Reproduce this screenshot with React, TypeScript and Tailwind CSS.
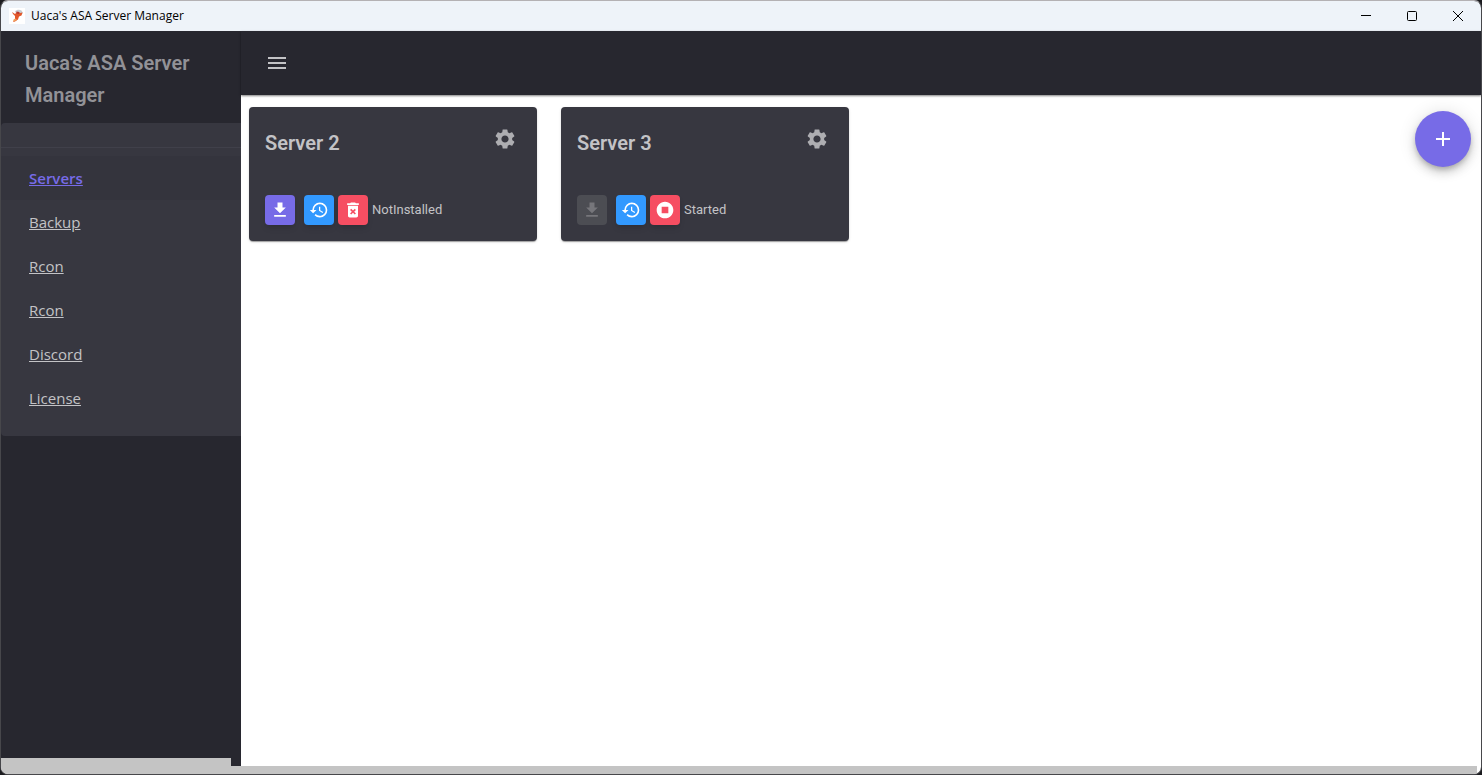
import type { ReactNode } from 'react';
import { MdAdd, MdDeleteForever, MdDownload, MdHistory, MdMenu, MdSettings, MdStopCircle } from 'react-icons/md';
import { clsx } from 'clsx';

type Server = {
  name: string;
  status: string;
  installed: boolean;
};

const servers: Server[] = [
  { name: 'Server 2', status: 'NotInstalled', installed: false },
  { name: 'Server 3', status: 'Started', installed: true },
];

const navItems = ['Servers', 'Backup', 'Rcon', 'Rcon', 'Discord', 'License'];

function AppIcon() {
  return (
    <svg viewBox="0 0 16 16" className="size-4" aria-hidden="true">
      <path d="M0 0h16v16H0z" fill="#fff" />
      <path d="M6 3.500C7 1.500 11 1 12.500 2.500L14 5l-2 2-5-2z" fill="#c9cdd2" />
      <path d="M3 4l3 2 2-2 3 1 2.500-.5-1 3-2.500 1-1 3-3 2-2 .5 2-3.500V8L4 6z" fill="#e2582b" />
      <path d="M7.500 3.500l3 .5-.5 2-2.500-.5z" fill="#b5372f" />
      <path d="M4 12l2.500-1.500L8 12l-3 1.500z" fill="#f0a05a" />
    </svg>
  );
}

function TitleBar() {
  return (
    <div className="flex h-[30px] shrink-0 items-center bg-[#eef3f9] font-['Open_Sans','Noto_Sans',sans-serif] text-black">
      <div className="flex flex-1 items-center gap-[6px] pl-2">
        <AppIcon />
        <span className="text-[12px]">Uaca's ASA Server Manager</span>
      </div>
      <button aria-label="Minimize" className="flex h-full w-[46px] items-center justify-center">
        <svg viewBox="0 0 12 12" className="size-3" stroke="currentColor" fill="none">
          <path d="M1 5.500h10" />
        </svg>
      </button>
      <button aria-label="Maximize" className="flex h-full w-[46px] items-center justify-center">
        <svg viewBox="0 0 12 12" className="size-3" stroke="currentColor" fill="none">
          <rect x="1.500" y="1.500" width="9" height="9" rx="1" />
        </svg>
      </button>
      <button aria-label="Close" className="flex h-full w-[46px] items-center justify-center">
        <svg viewBox="0 0 12 12" className="size-3" stroke="currentColor" fill="none">
          <path d="M1 1l10 10M11 1L1 11" />
        </svg>
      </button>
    </div>
  );
}

function Sidebar() {
  return (
    <aside className="flex w-60 shrink-0 flex-col bg-[#27272f]">
      <h1 className="px-6 pt-4 pb-3 text-[20px] leading-8 font-semibold text-[#929297]">Uaca's ASA Server Manager</h1>
      <nav className="rounded-l bg-[#373740] pb-4 font-['Open_Sans','Noto_Sans',sans-serif]">
        <hr className="mb-2 border-0 border-b border-[#40404a] pt-6" />
        {navItems.map((item, i) => (
          <div key={i} className={clsx('flex h-11 items-center px-7', i === 0 && 'bg-[#34343d]')}>
            <a
              href="#"
              className={clsx('text-[15px] underline', i === 0 ? 'font-semibold text-[#776be7]' : 'text-[#c3c3c6]')}
            >
              {item}
            </a>
          </div>
        ))}
      </nav>
      {/* Horizontal scrollbar */}
      <div className="mt-auto mr-[10px] h-2 bg-[#c4c4c4]" />
    </aside>
  );
}

type IconButtonProps = {
  label: string;
  color: string;
  disabled?: boolean;
  children: ReactNode;
};

function IconButton({ label, color, disabled, children }: IconButtonProps) {
  return (
    <button
      aria-label={label}
      disabled={disabled}
      className={clsx('flex size-[30px] items-center justify-center rounded text-[20px]', color)}
    >
      {children}
    </button>
  );
}

function ServerCard({ server }: { server: Server }) {
  return (
    <article className="w-72 rounded bg-[#373740] p-4 text-[#c3c3c6] shadow-[0_2px_1px_-1px_rgba(0,0,0,0.2),0_1px_1px_rgba(0,0,0,0.14),0_1px_3px_rgba(0,0,0,0.12)]">
      <div className="flex items-start justify-between">
        <h2 className="pt-1 text-[20px] leading-8 font-semibold">{server.name}</h2>
        <button aria-label={`${server.name} settings`} className="p-1 text-[24px] text-[#adadb1]">
          <MdSettings />
        </button>
      </div>
      <div className="mt-9 flex items-center">
        <IconButton
          label="Install"
          disabled={server.installed}
          color={server.installed ? 'bg-[#4c4d53] text-[#76767b]' : 'bg-[#776be7] text-white shadow-md'}
        >
          <MdDownload />
        </IconButton>
        <div className="ml-[9px] flex items-center gap-1">
          <IconButton label="Update" color="bg-[#3299ff] text-white shadow-md">
            <MdHistory />
          </IconButton>
          <IconButton
            label={server.installed ? 'Stop' : 'Delete'}
            color="bg-[#f64e62] text-white shadow-md"
          >
            {server.installed ? <MdStopCircle /> : <MdDeleteForever />}
          </IconButton>
          <span className="text-[13px] leading-5">{server.status}</span>
        </div>
      </div>
    </article>
  );
}

function App() {
  return (
    <div className="h-screen bg-[#1b1b1f] font-[Roboto,sans-serif]">
      <div className="flex h-full flex-col overflow-hidden rounded-lg border border-[#47474b] border-t-[#b4b1b4]">
        <TitleBar />
        <div className="flex min-h-0 flex-1 flex-col bg-white">
          <div className="flex min-h-0 flex-1">
            <Sidebar />
            <div className="flex min-w-0 flex-1 flex-col">
              <header className="flex h-16 shrink-0 items-center bg-[#27272f] px-6 shadow-[0_1px_2px_rgba(0,0,0,0.5)]">
                <button aria-label="Toggle menu" className="text-[24px] text-[#c3c3c6]">
                  <MdMenu />
                </button>
              </header>
              <main className="flex items-start justify-between pt-3 pr-[10px] pl-2">
                <div className="flex flex-wrap gap-6">
                  {servers.map((server) => (
                    <ServerCard key={server.name} server={server} />
                  ))}
                </div>
                <button
                  aria-label="Add server"
                  className="mt-1 flex size-14 shrink-0 items-center justify-center rounded-full bg-[#776be7] text-[24px] text-white shadow-[0_3px_5px_-1px_rgba(0,0,0,0.2),0_6px_10px_rgba(0,0,0,0.14),0_1px_18px_rgba(0,0,0,0.12)]"
                >
                  <MdAdd />
                </button>
              </main>
            </div>
          </div>
          {/* Page scrollbar */}
          <div className="mr-1 h-2 shrink-0 bg-[#c4c4c4]" />
        </div>
      </div>
    </div>
  );
}

export default App;
